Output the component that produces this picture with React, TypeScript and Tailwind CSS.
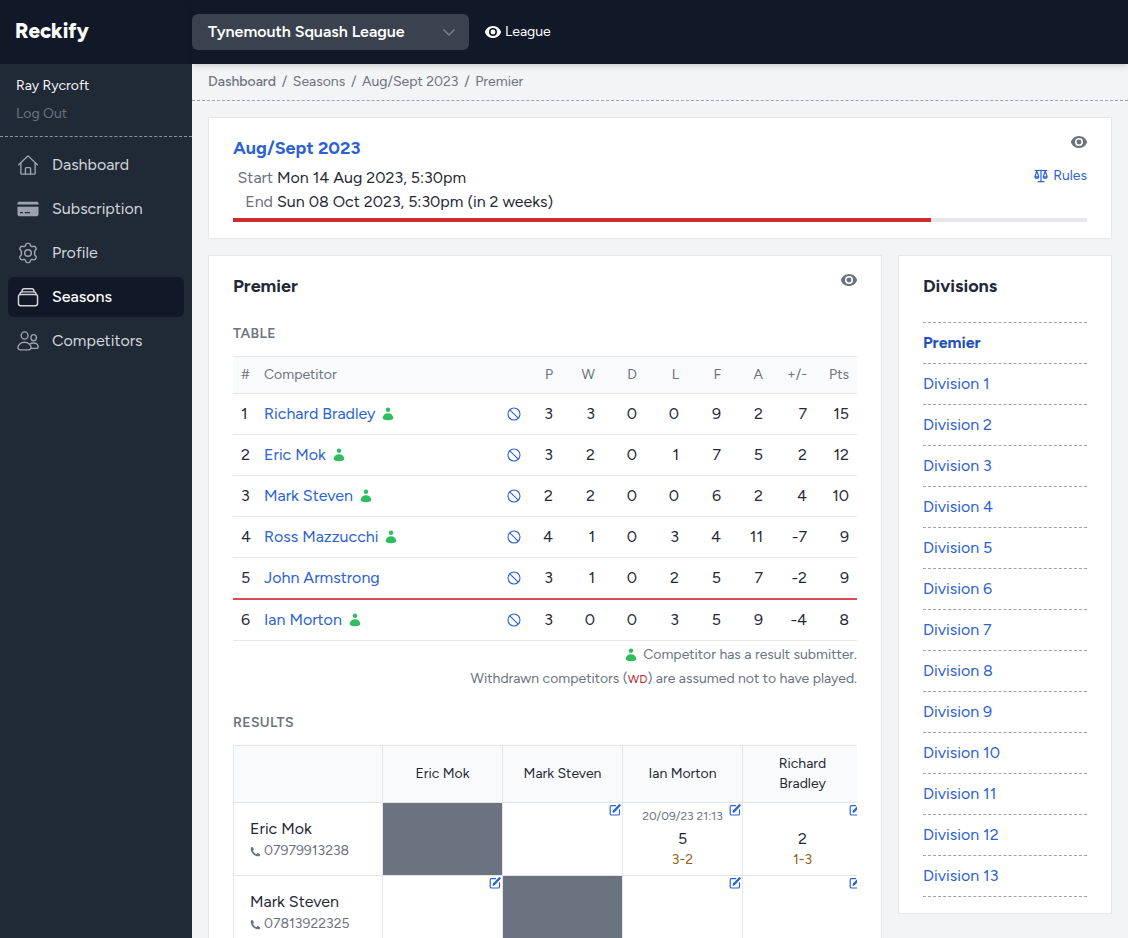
import type { ReactNode } from 'react'
import clsx from 'clsx'

interface IconProps {
    className?: string
}

function HouseIcon({ className }: IconProps) {
    return (
        <svg viewBox="0 0 24 24" className={className} fill="none" stroke="currentColor" strokeWidth="1.5" strokeLinecap="round" strokeLinejoin="round">
            <path d="M1.8 11.8 11.3 2.6a1 1 0 0 1 1.4 0l9.5 9.2" />
            <path d="M4.2 9.8v11.1a1 1 0 0 0 1 1h13.6a1 1 0 0 0 1-1V9.8" />
            <path d="M9.2 21.8v-6a1 1 0 0 1 1-1h3.6a1 1 0 0 1 1 1v6" />
        </svg>
    )
}

function CardIcon({ className }: IconProps) {
    return (
        <svg viewBox="0 0 24 24" className={className} fill="currentColor" fillRule="evenodd">
            <path d="M2.4 4.2h19.2c1 0 1.9.7 1.9 1.7v1.2H.5V5.9c0-1 .9-1.7 1.9-1.7z" />
            <path d="M.5 9.600h23v8.200c0 1.100-.9 2-2 2h-19c-1.100 0-2-.9-2-2zM3.300 15.200v1.500h3.200v-1.500zM8.500 15.200v1.500h5.600v-1.500z" />
        </svg>
    )
}

function GearIcon({ className }: IconProps) {
    return (
        <svg viewBox="0 0 24 24" className={className} fill="none" stroke="currentColor" strokeWidth="1.600" strokeLinecap="round" strokeLinejoin="round">
            <path d="M9.400 3.500c.2-1.100.7-2 1.700-2h1.800c1 0 1.500.9 1.700 2 .1.600.5 1 1 1.300s1.100.3 1.600.1c1.100-.4 2.100-.4 2.700.4l.9 1.500c.4.9-.1 1.700-.9 2.400-.5.400-.7.9-.7 1.500v2.600c0 .6.2 1.100.7 1.500.8.700 1.300 1.500.9 2.400l-.9 1.500c-.6.8-1.600.8-2.700.4-.5-.2-1.100-.2-1.600.1s-.9.700-1 1.300c-.2 1.100-.7 2-1.700 2h-1.800c-1 0-1.500-.9-1.700-2-.1-.600-.5-1-1-1.300s-1.100-.3-1.600-.1c-1.100.4-2.100.4-2.700-.4l-.9-1.500c-.4-.9.1-1.700.9-2.400.5-.4.7-.9.7-1.500v-2.600c0-.6-.2-1.100-.7-1.500-.8-.7-1.300-1.500-.9-2.400l.9-1.500c.6-.8 1.600-.8 2.700-.4.500.2 1.100.2 1.600-.1s.9-.7 1-1.300z" />
            <circle cx="12" cy="12" r="3.600" />
        </svg>
    )
}

function StackIcon({ className }: IconProps) {
    return (
        <svg viewBox="0 0 24 24" className={className} fill="none" stroke="currentColor" strokeWidth="1.600" strokeLinecap="round" strokeLinejoin="round">
            <rect x="1.600" y="9.200" width="20.800" height="12.300" rx="2.400" />
            <path d="M3.200 9.200c.1-1.800.9-2.800 2.400-2.800h12.800c1.500 0 2.300 1 2.400 2.800" />
            <path d="M5.400 6.200c0-1.900.8-3.100 2.300-3.100h8.600c1.500 0 2.300 1.200 2.300 3.100" />
        </svg>
    )
}

function PeopleIcon({ className }: IconProps) {
    return (
        <svg viewBox="0 0 24 24" className={className} fill="none" stroke="currentColor" strokeWidth="1.500" strokeLinejoin="round">
            <ellipse cx="8.300" cy="6" rx="3.700" ry="4" />
            <ellipse cx="18.200" cy="8.400" rx="3" ry="3.300" />
            <path d="M8.200 13.400c4.200 0 7.200 2.900 7.200 5.800 0 1.500-1.200 2.500-2.800 2.500H3.800C2.200 21.700 1 20.700 1 19.200c0-2.900 3-5.800 7.200-5.800z" />
            <path d="M14 15.400c1.100-.8 2.500-1.200 4.100-1.200 3 0 5 1.900 5 4 0 1.200-.9 1.900-2.200 1.900h-5.500" />
        </svg>
    )
}

function EyeIcon({ className }: IconProps) {
    return (
        <svg viewBox="0 0 24 24" className={className} fill="currentColor" fillRule="evenodd">
            <path d="M12 3C5.600 3 1.400 7.800.2 11a2.600 2.600 0 0 0 0 2C1.400 16.200 5.600 21 12 21s10.600-4.800 11.800-8a2.600 2.600 0 0 0 0-2C22.600 7.800 18.400 3 12 3zm0 3a6 6 0 1 1 0 12 6 6 0 0 1 0-12z" />
            <circle cx="12" cy="12" r="3.700" />
        </svg>
    )
}

function PersonIcon({ className }: IconProps) {
    return (
        <svg viewBox="0 0 12 14" className={className} fill="currentColor">
            <circle cx="6" cy="2.700" r="2.200" />
            <path d="M6 6.200c3 0 5 1.900 5.300 4.400.2 1.700-1.700 2.700-5.300 2.700S.5 12.300.7 10.600C1 8.100 3 6.200 6 6.200z" />
        </svg>
    )
}

function BanIcon({ className }: IconProps) {
    return (
        <svg viewBox="0 0 14 14" className={className} fill="none" stroke="currentColor" strokeWidth="1.100">
            <circle cx="7" cy="7" r="6" />
            <path d="m2.800 2.800 8.400 8.400" />
        </svg>
    )
}

function ScalesIcon({ className }: IconProps) {
    return (
        <svg viewBox="0 0 14 14" className={className} fill="none" stroke="currentColor" strokeWidth="1.200" strokeLinejoin="round">
            <path d="M.8 1.500h12.400M7 .8v11.600M3.600 12.700h6.800" />
            <path d="M2.800 2 .9 7.800c0 1.100.8 1.700 1.900 1.700s1.900-.6 1.900-1.700zM.9 7.800h3.800M11.200 2 9.300 7.800c0 1.100.8 1.700 1.900 1.700s1.900-.6 1.900-1.700zM9.300 7.800h3.800" />
        </svg>
    )
}

function PhoneIcon({ className }: IconProps) {
    return (
        <svg viewBox="0 0 12 12" className={className} fill="currentColor">
            <path d="M2.200 1C1.400 1 .8 1.700.8 2.600c0 4.600 4 8.600 8.600 8.600.9 0 1.700-.6 1.700-1.500 0-.4-.2-.7-.5-.9L9 7.900c-.4-.2-.8-.2-1.100.1l-.7.600c-.2.2-.5.2-.7.1C5.200 8 4 6.800 3.400 5.500c-.1-.3-.1-.5.1-.7L4 4.100c.3-.3.3-.7.1-1.100L3.200 1.500C3 1.200 2.600 1 2.200 1z" />
        </svg>
    )
}

function EditIcon({ className }: IconProps) {
    return (
        <svg viewBox="0 0 12 12" className={className} fill="none" stroke="currentColor" strokeWidth="1.200" strokeLinecap="round" strokeLinejoin="round">
            <path d="M6.600 1.700H2.500c-.8 0-1.300.5-1.300 1.300v6.700c0 .8.5 1.300 1.300 1.300h6.700c.8 0 1.300-.5 1.300-1.300V5.900" />
            <path d="M10.600 1.300 5.300 6.900" strokeWidth="2.300" />
            <path d="m4.100 8.100.4-1.400.9.900z" />
        </svg>
    )
}

const NAV = [
    { label: 'Dashboard', icon: HouseIcon },
    { label: 'Subscription', icon: CardIcon },
    { label: 'Profile', icon: GearIcon },
    { label: 'Seasons', icon: StackIcon, active: true },
    { label: 'Competitors', icon: PeopleIcon },
]

const STANDINGS = [
    { name: 'Richard Bradley', submitter: true, stats: [3, 3, 0, 0, 9, 2, 7, 15] },
    { name: 'Eric Mok', submitter: true, stats: [3, 2, 0, 1, 7, 5, 2, 12] },
    { name: 'Mark Steven', submitter: true, stats: [2, 2, 0, 0, 6, 2, 4, 10] },
    { name: 'Ross Mazzucchi', submitter: true, stats: [4, 1, 0, 3, 4, 11, -7, 9] },
    { name: 'John Armstrong', submitter: false, stats: [3, 1, 0, 2, 5, 7, -2, 9] },
    { name: 'Ian Morton', submitter: true, stats: [3, 0, 0, 3, 5, 9, -4, 8] },
]

const PLAYERS = ['Eric Mok', 'Mark Steven', 'Ian Morton', 'Richard Bradley']

interface Result {
    date?: string
    points: number
    score: string
}

const RESULTS: { name: string; phone: string; results: (Result | null)[] }[] = [
    {
        name: 'Eric Mok',
        phone: '07979913238',
        results: [null, null, { date: '20/09/23 21:13', points: 5, score: '3-2' }, { points: 2, score: '1-3' }],
    },
    { name: 'Mark Steven', phone: '07813922325', results: [null, null, null, null] },
]

const DIVISIONS = ['Premier', ...Array.from({ length: 13 }, (_, i) => `Division ${i + 1}`)]

function Sidebar() {
    return (
        <aside className="flex w-48 shrink-0 flex-col bg-[#202a36]">
            <div className="border-b border-dashed border-[#8a929d] px-4 pt-[11px] pb-[12px] text-sm">
                <div className="leading-[21px] text-[#f3f4f6]">Ray Rycroft</div>
                <a className="mt-[7px] block leading-[21px] text-[#6b7280]">Log Out</a>
            </div>
            <nav className="flex flex-col gap-1 px-2 py-2">
                {NAV.map(({ label, icon: Icon, active }) => (
                    <a
                        key={label}
                        className={clsx(
                            'flex h-10 items-center gap-[13px] rounded-md px-[9px]',
                            active ? 'bg-[#111827] font-medium text-white' : 'text-[#d1d5db]'
                        )}
                    >
                        <Icon className={clsx('size-[22px]', active ? 'text-[#d1d5db]' : 'text-[#9ca3af]')} />
                        {label}
                    </a>
                ))}
            </nav>
        </aside>
    )
}

function Header() {
    return (
        <header className="flex h-16 bg-[#111827] text-white">
            <div className="w-48 shrink-0 pt-4 pl-[15px] text-[20.5px] leading-[30px] font-extrabold">Reckify</div>
            <div className="flex flex-1 items-center shadow-md">
                <button className="flex h-9 w-[277px] items-center justify-between rounded-md bg-[#3a4250] pr-[13px] pl-4 font-semibold">
                    Tynemouth Squash League
                    <svg viewBox="0 0 14 14" className="size-[14px] text-[#7b8491]" fill="none" stroke="currentColor" strokeWidth="1.400">
                        <path d="m1.500 4.500 5.500 5.500 5.500-5.500" />
                    </svg>
                </button>
                <a className="ml-4 flex items-center gap-1 text-sm">
                    <EyeIcon className="size-4" />
                    League
                </a>
            </div>
        </header>
    )
}

function Breadcrumb() {
    return (
        <div className="flex h-[37px] border-b border-dashed border-[#9ca3af] px-4 pt-2 text-sm text-[#6b7280]">
            {['Dashboard', 'Seasons', 'Aug/Sept 2023', 'Premier'].map((item, i) => (
                <span key={item} className={clsx(i === 0 && 'font-medium')}>
                    {i > 0 && <span className="px-[5.7px]">/</span>}
                    {item}
                </span>
            ))}
        </div>
    )
}

function Card({ className, children }: { className?: string; children: ReactNode }) {
    return <section className={clsx('border border-[#e5e7eb] bg-white px-6', className)}>{children}</section>
}

function SeasonCard() {
    return (
        <Card className="h-[122px] pt-4">
            <div className="flex h-[84px] justify-between">
                <div>
                    <h1 className="text-lg leading-7 font-bold text-[#2c62d2]">Aug/Sept 2023</h1>
                    <dl className="mt-1 grid grid-cols-[40px_auto] gap-x-1">
                        <dt className="text-right text-[#6b7280]">Start</dt>
                        <dd>Mon 14 Aug 2023, 5:30pm</dd>
                        <dt className="text-right text-[#6b7280]">End</dt>
                        <dd>Sun 08 Oct 2023, 5:30pm (in 2 weeks)</dd>
                    </dl>
                </div>
                <div className="flex flex-col items-end">
                    <EyeIcon className="size-4 text-[#6b7280]" />
                    <a className="mt-4 flex items-center gap-[5px] text-sm text-[#2c62d2]">
                        <ScalesIcon className="size-[14px]" />
                        Rules
                    </a>
                </div>
            </div>
            <div className="h-1 bg-[#e5e7eb]">
                <div className="h-1 bg-[#cd2c2f]" style={{ width: '81.7%' }} />
            </div>
        </Card>
    )
}

function Standings() {
    return (
        <table className="w-full table-fixed border-collapse">
            <colgroup>
                <col className="w-[23px]" />
                <col />
                <col className="w-[30px]" />
                <col className="w-[32px]" />
                <col className="w-[42px]" />
                <col className="w-[42px]" />
                <col className="w-[42px]" />
                <col className="w-[42px]" />
                <col className="w-[42px]" />
                <col className="w-[44px]" />
                <col className="w-[42px]" />
            </colgroup>
            <thead>
                <tr className="h-[37px] border-y border-[#e5e7eb] bg-[#f9fafb] text-sm text-[#6b7280]">
                    <th className="pl-2 text-left font-normal">#</th>
                    <th className="pl-2 text-left font-normal">Competitor</th>
                    <th></th>
                    {['P', 'W', 'D', 'L', 'F', 'A', '+/-', 'Pts'].map((h) => (
                        <th key={h} className="pr-2 text-right font-normal">{h}</th>
                    ))}
                </tr>
            </thead>
            <tbody>
                {STANDINGS.map((row, i) => (
                    <tr
                        key={row.name}
                        className={clsx(
                            i === 5 ? 'h-[42px]' : 'h-[41px]',
                            i === 4 ? 'border-b-2 border-[#d64c50]' : 'border-b border-[#e5e7eb]'
                        )}
                    >
                        <td className="pl-2">{i + 1}</td>
                        <td className="pl-2">
                            <div className="flex items-center text-[#2c62d2]">
                                {row.name}
                                {row.submitter && <PersonIcon className="ml-[7px] h-[14px] w-3 text-[#2fbd5f]" />}
                            </div>
                        </td>
                        <td className="pl-2">
                            <BanIcon className="size-[14px] text-[#2c62d2]" />
                        </td>
                        {row.stats.map((n, j) => (
                            <td key={j} className="pr-2 text-right">{n}</td>
                        ))}
                    </tr>
                ))}
            </tbody>
        </table>
    )
}

function ResultsGrid() {
    return (
        <div className="overflow-hidden">
            <table className="w-[630px] table-fixed border-collapse">
                <colgroup>
                    <col className="w-[149px]" />
                    <col className="w-[120px]" />
                    <col className="w-[120px]" />
                    <col className="w-[120px]" />
                    <col className="w-[120px]" />
                </colgroup>
                <thead>
                    <tr className="h-[57px] bg-[#f9fafb] text-sm">
                        <th className="border border-[#e2e5e9]"></th>
                        {PLAYERS.map((p) => (
                            <th key={p} className="border border-[#e2e5e9] px-4 font-normal">{p}</th>
                        ))}
                    </tr>
                </thead>
                <tbody>
                    {RESULTS.map((row, i) => (
                        <tr key={row.name} className="h-[73px]">
                            <td className="border border-[#e2e5e9] pl-4">
                                <div className="leading-6">{row.name}</div>
                                <div className="flex items-center gap-[3px] text-sm text-[#6b7280]">
                                    <PhoneIcon className="mt-px size-[11px]" />
                                    {row.phone}
                                </div>
                            </td>
                            {row.results.map((r, j) => (
                                <td
                                    key={j}
                                    className={clsx('relative border border-[#e2e5e9] p-0 align-top', i === j && 'bg-[#6b7280]')}
                                >
                                    {i !== j && <EditIcon className="absolute top-px right-[1px] size-3 text-[#2c62d2]" />}
                                    {r && (
                                        <div className="text-center">
                                            <div className="mt-[5px] h-4 text-xs leading-4 text-[#6b7280]">{r.date}</div>
                                            <div className="mt-[3px] leading-6">{r.points}</div>
                                            <div className="-mt-px text-sm leading-5 text-[#9a5b14]">{r.score}</div>
                                        </div>
                                    )}
                                </td>
                            ))}
                        </tr>
                    ))}
                </tbody>
            </table>
        </div>
    )
}

function DivisionCard() {
    return (
        <Card className="min-w-0 flex-1 pt-4">
            <div className="flex items-start justify-between">
                <h2 className="text-lg leading-7 font-bold">Premier</h2>
                <EyeIcon className="size-4 text-[#6b7280]" />
            </div>
            <h3 className="mt-6 text-sm leading-5 font-semibold tracking-wide text-[#6b7280]">TABLE</h3>
            <div className="mt-3">
                <Standings />
            </div>
            <div className="mt-[2px] text-right text-sm leading-6 text-[#6b7280]">
                <div className="flex items-center justify-end gap-[6px]">
                    <PersonIcon className="h-[14px] w-3 text-[#2fbd5f]" />
                    Competitor has a result submitter.
                </div>
                <div>
                    Withdrawn competitors (<span className="text-xs text-[#c0272d]">WD</span>) are assumed not to have played.
                </div>
            </div>
            <h3 className="mt-[22px] mb-3 text-sm leading-5 font-semibold tracking-wide text-[#6b7280]">RESULTS</h3>
            <ResultsGrid />
        </Card>
    )
}

function DivisionsCard() {
    return (
        <Card className="w-[214px] shrink-0 self-start pt-4 pb-4">
            <h2 className="text-lg leading-7 font-bold">Divisions</h2>
            <ul className="mt-[22px] border-t border-dashed border-[#9ca3af] text-[#2c62d2]">
                {DIVISIONS.map((d, i) => (
                    <li
                        key={d}
                        className={clsx('flex h-[41px] items-center border-b border-dashed border-[#9ca3af]', i === 0 && 'font-bold text-[#2350b8]')}
                    >
                        {d}
                    </li>
                ))}
            </ul>
        </Card>
    )
}

export default function App() {
    return (
        <div className="flex h-[938px] w-[1128px] flex-col overflow-hidden bg-[#f3f4f6] font-[Figtree,Lato,sans-serif] text-base text-[#1f2937]">
            <Header />
            <div className="flex min-h-0 flex-1">
                <Sidebar />
                <main className="min-w-0 flex-1">
                    <Breadcrumb />
                    <div className="flex flex-col gap-4 p-4">
                        <SeasonCard />
                        <div className="flex gap-4">
                            <DivisionCard />
                            <DivisionsCard />
                        </div>
                    </div>
                </main>
            </div>
        </div>
    )
}
